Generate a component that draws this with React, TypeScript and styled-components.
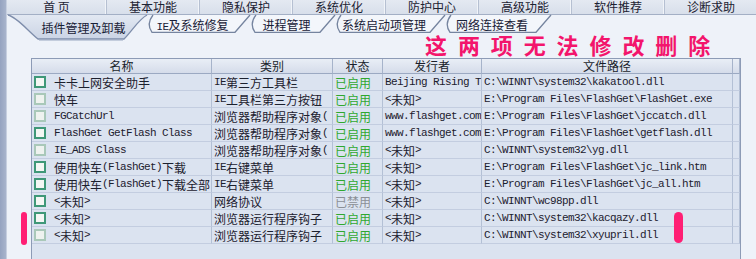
import React from 'react';
import styled, { createGlobalStyle } from 'styled-components';

const GlobalStyle = createGlobalStyle`
  html, body { margin: 0; padding: 0; }
  body {
    font-family: "Noto Sans CJK SC", "Noto Sans", sans-serif;
    font-size: 12px;
    color: #1e2433;
    background: #eef2f9;
  }
  * { box-sizing: border-box; }
`;

const Page = styled.div`
  position: relative;
  display: flex;
  width: 756px;
  height: 259px;
  overflow: hidden;
  background: #eef2f9;
`;

const LeftRail = styled.div`
  flex: none;
  width: 7px;
  background: linear-gradient(to right, #95a3c0, #a8b4cc);
  border-right: 1px solid #c6cfe0;
`;

const Main = styled.div`
  flex: 1;
  display: flex;
  flex-direction: column;
  min-width: 0;
`;

const Nav = styled.div`
  flex: none;
  display: flex;
  height: 15px;
  background: linear-gradient(#e4e9f2, #d8dfeb);
  border-bottom: 1px solid #a3afc5;
`;

const NavItem = styled.div<{ $w: number }>`
  flex: none;
  width: ${(p) => p.$w}px;
  line-height: 14px;
  text-align: center;
  white-space: nowrap;
  color: #1c2232;
  border-right: 1px solid #b6c0d2;
  box-shadow: inset -2px 0 0 -1px #f1f4f9;
`;

const TabStrip = styled.div`
  flex: none;
  display: flex;
  align-items: flex-start;
  height: 26px;
  padding-left: 1px;
`;

const TabShape = styled.svg`
  position: absolute;
  left: 0;
  top: 0;
  overflow: visible;
  z-index: 0;
`;

const TabLabel = styled.span`
  position: relative;
  z-index: 1;
  white-space: nowrap;
`;

const ActiveTab = styled.div`
  position: relative;
  z-index: 10;
  flex: none;
  width: 139px;
  height: 25px;
  padding: 5px 20px 0 32px;
  line-height: 16px;
  text-align: center;
  color: #182036;
`;

const Tab = styled.div<{ $w: number; $z: number }>`
  position: relative;
  z-index: ${(p) => p.$z};
  flex: none;
  width: ${(p) => p.$w}px;
  height: 18px;
  padding: 2px 14px 0 2px;
  line-height: 16px;
  text-align: center;
  color: #182036;
`;

const Content = styled.div`
  flex: 1;
  display: flex;
  flex-direction: column;
  padding: 17px 15px 0 24px;
  min-height: 0;
`;

const ListBox = styled.div`
  flex: 1;
  border: 1px solid #8d9bb6;
  border-bottom: none;
  background: #dbe3f0;
  overflow: hidden;
`;

const GridRow = styled.div`
  display: grid;
  grid-template-columns: 180px 121px 50px 99px 251px 1fr;
`;

const HeadCell = styled.div`
  height: 15px;
  line-height: 14px;
  text-align: center;
  white-space: nowrap;
  overflow: hidden;
  color: #1a1f2c;
  background: linear-gradient(#e9eef6, #d5dcea);
  border-right: 1px solid #a6b3ca;
  border-bottom: 1px solid #9ba9c2;
`;

const Cell = styled.div`
  display: flex;
  align-items: center;
  height: 17px;
  padding-left: 2px;
  white-space: nowrap;
  overflow: hidden;
  color: #1b202e;
  border-right: 1px solid #b3c0d5;
  border-bottom: 1px solid #c3cde0;
`;

const Check = styled.span<{ $faded?: boolean }>`
  flex: none;
  width: 12px;
  height: 12px;
  margin-right: 8px;
  border: 2px solid ${(p) => (p.$faded ? '#a9c8b9' : '#3f9878')};
  background: ${(p) => (p.$faded ? '#eef2ef' : '#f4f7f4')};
`;

const Status = styled.span<{ $off?: boolean }>`
  color: ${(p) => (p.$off ? '#8b8f96' : '#2fa82f')};
`;

const Mono = styled.span`
  font-family: "Liberation Mono", "DejaVu Sans Mono", monospace;
  font-size: 11px;
  letter-spacing: -0.6px;
`;

const Note = styled.div`
  position: absolute;
  left: 425px;
  top: 33px;
  font-size: 22px;
  line-height: 22px;
  font-weight: 700;
  letter-spacing: 10.9px;
  color: #f3156c;
  white-space: nowrap;
  z-index: 20;
`;

const Mark = styled.span<{ $x: number; $y: number; $w: number; $h: number }>`
  position: absolute;
  left: ${(p) => p.$x}px;
  top: ${(p) => p.$y}px;
  width: ${(p) => p.$w}px;
  height: ${(p) => p.$h}px;
  border-radius: ${(p) => p.$w / 2}px;
  background: #ff1f74;
  filter: blur(0.6px);
  z-index: 20;
`;

const Txt = ({ s }: { s: string }) => {
  const parts = s.match(/[\x20-\x7e]+|[^\x20-\x7e]+/g) || [];
  return (
    <>
      {parts.map((p, i) =>
        /^[\x20-\x7e]/.test(p) ? <Mono key={i}>{p}</Mono> : <span key={i}>{p}</span>
      )}
    </>
  );
};

const navItems: [string, number][] = [
  ['首 页', 100],
  ['基本功能', 93],
  ['隐私保护', 93],
  ['系统优化', 93],
  ['防护中心', 93],
  ['高级功能', 93],
  ['软件推荐', 93],
  ['诊断求助', 93],
];

const tabs: [string, number][] = [
  ['IE及系统修复', 103],
  ['进程管理', 85],
  ['系统启动项管理', 110],
  ['网络连接查看', 106],
];

type Row = {
  name: string;
  type: string;
  off?: boolean;
  pub: string;
  path: string;
  faded?: boolean;
};

const rows: Row[] = [
  { name: '卡卡上网安全助手', type: 'IE第三方工具栏', pub: 'Beijing Rising T', path: 'C:\\WINNT\\system32\\kakatool.dll' },
  { name: '快车', type: 'IE工具栏第三方按钮', pub: '<未知>', path: 'E:\\Program Files\\FlashGet\\FlashGet.exe', faded: true },
  { name: 'FGCatchUrl', type: '浏览器帮助程序对象(', pub: 'www.flashget.com', path: 'E:\\Program Files\\FlashGet\\jccatch.dll', faded: true },
  { name: 'FlashGet GetFlash Class', type: '浏览器帮助程序对象(', pub: 'www.flashget.com', path: 'E:\\Program Files\\FlashGet\\getflash.dll' },
  { name: 'IE_ADS Class', type: '浏览器帮助程序对象(', pub: '<未知>', path: 'C:\\WINNT\\system32\\yg.dll', faded: true },
  { name: '使用快车(FlashGet)下载', type: 'IE右键菜单', pub: '<未知>', path: 'E:\\Program Files\\FlashGet\\jc_link.htm' },
  { name: '使用快车(FlashGet)下载全部', type: 'IE右键菜单', pub: '<未知>', path: 'E:\\Program Files\\FlashGet\\jc_all.htm' },
  { name: '<未知>', type: '网络协议', off: true, pub: '<未知>', path: 'C:\\WINNT\\wc98pp.dll' },
  { name: '<未知>', type: '浏览器运行程序钩子', pub: '<未知>', path: 'C:\\WINNT\\system32\\kacqazy.dll' },
  { name: '<未知>', type: '浏览器运行程序钩子', pub: '<未知>', path: 'C:\\WINNT\\system32\\xyupril.dll', faded: true },
];

const ActiveShape = () => (
  <TabShape width="139" height="25" viewBox="0 0 139 25">
    <defs>
      <linearGradient id="act" x1="0" y1="0" x2="0" y2="1">
        <stop offset="0" stopColor="#e2e8f2" />
        <stop offset="1" stopColor="#cbd4e5" />
      </linearGradient>
    </defs>
    <path d="M0,0 C9,2 20,16 30,24 L116,24 C124,16 131,4 139,0 Z" fill="url(#act)" />
    <path d="M0,0 C9,2 20,16 30,24 L116,24 C124,16 131,4 139,0" fill="none" stroke="#7e8dab" strokeWidth="1.3" />
    <path d="M31,25.3 L115,25.3" stroke="#b9c3d6" strokeWidth="1" />
  </TabShape>
);

const InactiveShape = ({ w }: { w: number }) => (
  <TabShape width={w} height="18" viewBox={`0 0 ${w} 18`}>
    <path d={`M6,0 Q-1,9 5,17.3 L${w - 15},17.3 L${w},0 Z`} fill="#f3f6fb" />
    <path d={`M6,0 Q-1,9 5,17.3 L${w - 15},17.3 L${w},0`} fill="none" stroke="#75849f" strokeWidth="1.3" />
  </TabShape>
);

export default function App() {
  return (
    <Page>
      <GlobalStyle />
      <LeftRail />
      <Main>
        <Nav>
          {navItems.map(([t, w]) => (
            <NavItem key={t} $w={w}>{t}</NavItem>
          ))}
        </Nav>
        <TabStrip>
          <ActiveTab>
            <ActiveShape />
            <TabLabel>插件管理及卸载</TabLabel>
          </ActiveTab>
          {tabs.map(([t, w], i) => (
            <Tab key={t} $w={w} $z={5 - i}>
              <InactiveShape w={w} />
              <TabLabel><Txt s={t} /></TabLabel>
            </Tab>
          ))}
        </TabStrip>
        <Content>
          <ListBox>
            <GridRow>
              <HeadCell>名称</HeadCell>
              <HeadCell>类别</HeadCell>
              <HeadCell>状态</HeadCell>
              <HeadCell>发行者</HeadCell>
              <HeadCell>文件路径</HeadCell>
              <HeadCell />
            </GridRow>
            {rows.map((r, i) => (
              <GridRow key={i}>
                <Cell>
                  <Check $faded={r.faded} />
                  <Txt s={r.name} />
                </Cell>
                <Cell><Txt s={r.type} /></Cell>
                <Cell><Status $off={r.off}>{r.off ? '已禁用' : '已启用'}</Status></Cell>
                <Cell><Txt s={r.pub} /></Cell>
                <Cell><Txt s={r.path} /></Cell>
                <Cell />
              </GridRow>
            ))}
          </ListBox>
        </Content>
      </Main>
      <Note>这两项无法修改删除</Note>
      <Mark $x={21} $y={212} $w={6} $h={33} />
      <Mark $x={674} $y={212} $w={9} $h={31} />
    </Page>
  );
}
